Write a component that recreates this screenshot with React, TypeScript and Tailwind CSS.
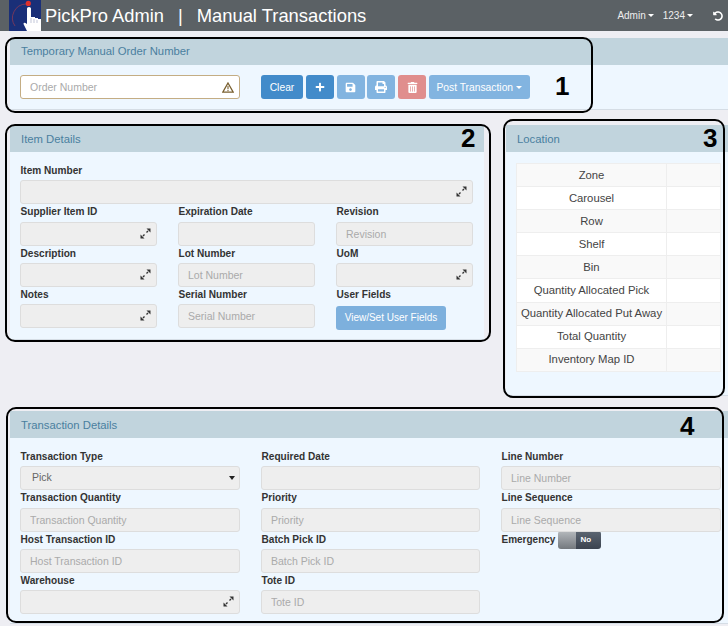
import { FaPlus, FaSave, FaPrint, FaTrashAlt, FaUndoAlt } from 'react-icons/fa';
import type { ReactNode } from 'react';

const LOCATION_ROWS = ['Zone', 'Carousel', 'Row', 'Shelf', 'Bin', 'Quantity Allocated Pick', 'Quantity Allocated Put Away', 'Total Quantity', 'Inventory Map ID'];

function ExpandIcon() {
  return (
    <svg width="11" height="11" viewBox="0 0 11 11" className="absolute right-[6px] top-[6px] text-[#333]">
      <path d="M6.5 0.5H10.5V4.5Z" fill="currentColor" />
      <path d="M4.5 10.5H0.5V6.5Z" fill="currentColor" />
      <path d="M8 3L6.5 4.5M3 8L4.5 6.5" stroke="currentColor" strokeWidth="1.4" />
    </svg>
  );
}

function Panel({ title, className, titleClass = 'pt-[1px]', children }: { title: string; className: string; titleClass?: string; children: ReactNode }) {
  return (
    <div className={`bg-[#eef7ff] border-b border-[#d5dde5] ${className}`}>
      <div className={`h-[27px] bg-[#c1d4dd] pl-[11px] flex items-center text-[11.3px] text-[#4a7f9f] ${titleClass}`}>{title}</div>
      {children}
    </div>
  );
}

function Label({ text }: { text: string }) {
  return <div className="h-[17.33px] pl-[0.5px] text-[10.1px] leading-[15px] font-bold text-[#333]">{text}</div>;
}

function Field({ label, placeholder, expand }: { label: string; placeholder?: string; expand?: boolean }) {
  return (
    <div>
      <Label text={label} />
      <div className="relative">
        <input readOnly placeholder={placeholder}
          className="block w-full h-[24px] rounded-[3px] border border-[#ddd] bg-[#eee] px-[9px] text-[10.5px] placeholder:text-[#aaa] outline-none" />
        {expand && <ExpandIcon />}
      </div>
    </div>
  );
}

function Callout({ n, box, num }: { n: string; box: string; num: string }) {
  return (
    <div className={`absolute border-2 border-black rounded-[10px] pointer-events-none ${box}`}>
      <span className={`absolute text-[26px] leading-none font-bold text-black ${num}`}>{n}</span>
    </div>
  );
}

export default function App() {
  return (
    <div className="relative w-[728px] h-[626px] overflow-hidden bg-[#eeeef3]" style={{ fontFamily: '"Liberation Sans", Arial, sans-serif' }}>
      {/* Navbar */}
      <div className="h-[31px] bg-[#5b6165] flex items-center text-white">
        <svg width="32" height="32" viewBox="0 0 32 32" className="ml-[9px] self-start shrink-0">
          <rect width="32" height="31" fill="#1a2f78" />
          <path d="M6 26A14 14 0 0 1 17 4" fill="none" stroke="#8a3a55" strokeWidth="0.8" />
          <circle cx="19.3" cy="3.4" r="2.6" fill="#e0302c" />
          <path d="M18 20V8.5Q18 7 20 7T22 8.5V17H26V18H29V19H32V31H18L14.5 24Q14.5 21.5 18 24Z" fill="#fff" />
          <path d="M25 19V23M28 20V23M22 18V23" stroke="#9aa3c0" strokeWidth="0.6" />
        </svg>
        <span className="ml-[4px] text-[18.3px]">PickPro Admin</span>
        <span className="ml-[14px] text-[18.3px]">|</span>
        <span className="ml-[14px] text-[18.4px]">Manual Transactions</span>
        <div className="ml-auto flex items-center text-[10px] text-[#eee]">
          <span>Admin</span>
          <span className="ml-[2px] border-x-[3px] border-t-[3px] border-x-transparent border-t-white" />
          <span className="ml-[9px]">1234</span>
          <span className="ml-[2px] border-x-[3px] border-t-[3px] border-x-transparent border-t-white" />
          <FaUndoAlt className="ml-[20px] mr-[5px] text-[10px] text-white" />
        </div>
      </div>

      {/* Temporary order */}
      <Panel title="Temporary Manual Order Number" titleClass="pb-[1px]" className="ml-[10px] mt-[7px] w-[718px] h-[72px]">
        <div className="pt-[10px] px-[10px] flex">
          <div className="relative w-[220px]">
            <input readOnly placeholder="Order Number"
              className="block w-full h-[24px] rounded-[3px] border border-[#c4ad84] bg-white px-[9px] text-[10.5px] placeholder:text-[#aaa] outline-none" />
            <svg width="12" height="11" viewBox="0 0 12 11" className="absolute right-[6px] top-[7px]">
              <path d="M6 1L11.2 10.2H0.8Z" fill="none" stroke="#7a6030" strokeWidth="1.3" />
              <path d="M6 4V7.3M6 8V9.2" stroke="#7a6030" strokeWidth="1.1" />
            </svg>
          </div>
          <div className="ml-[21px] flex gap-[2.75px] text-white text-[10.3px]">
            <button className="w-[42px] h-[24px] pt-[1px] rounded-[3px] bg-[#428bca]">Clear</button>
            <button className="w-[28px] h-[24px] rounded-[3px] bg-[#428bca] flex items-center justify-center"><FaPlus className="text-[10px]" /></button>
            <button className="w-[28px] h-[24px] rounded-[3px] bg-[#82b4e0] flex items-center justify-center"><FaSave className="text-[11px]" /></button>
            <button className="w-[28px] h-[24px] rounded-[3px] bg-[#82b4e0] flex items-center justify-center"><FaPrint className="text-[12px]" /></button>
            <button className="w-[28px] h-[24px] rounded-[3px] bg-[#e08e8d] flex items-center justify-center"><FaTrashAlt className="text-[11px]" /></button>
            <button className="w-[101px] h-[24px] pt-[1px] rounded-[3px] bg-[#82b4e0] flex items-center justify-center">
              Post Transaction
              <span className="ml-[3px] border-x-[3px] border-t-[3px] border-x-transparent border-t-white" />
            </button>
          </div>
        </div>
      </Panel>

      {/* Item details and location */}
      <div className="mt-[15px] ml-[10px] flex items-start h-[271px]">
        <Panel title="Item Details" className="w-[474px] h-[215px]">
          <div className="pt-[11px] pl-[10px] pr-[11px]">
            <Field label="Item Number" expand />
            <div className="grid grid-cols-[137px_137px_137px] gap-x-[21px]">
              <Field label="Supplier Item ID" expand />
              <Field label="Expiration Date" />
              <Field label="Revision" placeholder="Revision" />
              <Field label="Description" expand />
              <Field label="Lot Number" placeholder="Lot Number" />
              <Field label="UoM" expand />
              <Field label="Notes" expand />
              <Field label="Serial Number" placeholder="Serial Number" />
              <div>
                <Label text="User Fields" />
                <button className="w-[110px] h-[24px] rounded-[3px] bg-[#7db0dd] text-white text-[10px]">View/Set User Fields</button>
              </div>
            </div>
          </div>
        </Panel>

        <Panel title="Location" className="ml-[22px] w-[222px] h-[271px]">
          <div className="pt-[11px] pl-[10px]">
            <table className="w-[205px] border-collapse text-[11.3px] text-[#444]">
              <tbody>
                {LOCATION_ROWS.map((row, i) => (
                  <tr key={row} className={`h-[23.1px] ${i % 2 === 0 ? 'bg-[#f9f9f9]' : 'bg-white'}`}>
                    <td className="w-[150px] border border-[#eee] text-center p-0">{row}</td>
                    <td className="border border-[#eee] p-0" />
                  </tr>
                ))}
              </tbody>
            </table>
          </div>
        </Panel>
      </div>

      {/* Transaction details */}
      <Panel title="Transaction Details" className="mt-[15px] ml-[10px] w-[718px] h-[213px]">
        <div className="pt-[11px] px-[10px] grid grid-cols-[220px_219px_220px] gap-x-[21px]">
          <div>
            <Label text="Transaction Type" />
            <div className="relative h-[24px] rounded-[3px] border border-[#ddd] bg-[#eee] pl-[11px] flex items-center text-[10.5px] text-[#666]">
              Pick
              <span className="absolute right-[4px] top-[9px] border-x-[3px] border-t-[4px] border-x-transparent border-t-[#222]" />
            </div>
          </div>
          <Field label="Required Date" />
          <Field label="Line Number" placeholder="Line Number" />
          <Field label="Transaction Quantity" placeholder="Transaction Quantity" />
          <Field label="Priority" placeholder="Priority" />
          <Field label="Line Sequence" placeholder="Line Sequence" />
          <Field label="Host Transaction ID" placeholder="Host Transaction ID" />
          <Field label="Batch Pick ID" placeholder="Batch Pick ID" />
          <div className="flex items-start">
            <span className="pl-[0.5px] text-[10px] leading-[15px] font-bold text-[#333]">Emergency</span>
            <div className="ml-[3px] -mt-[1px] w-[43px] h-[18px] rounded-[3px] overflow-hidden flex shrink-0">
              <div className="w-[18px] bg-gradient-to-b from-[#b5b9bd] to-[#74797e]" />
              <div className="flex-1 bg-gradient-to-b from-[#5c6672] to-[#3c4450] text-white text-[8px] font-bold flex items-center pl-[4px]">No</div>
            </div>
          </div>
          <Field label="Warehouse" expand />
          <Field label="Tote ID" placeholder="Tote ID" />
        </div>
      </Panel>

      {/* Numbered callouts */}
      <Callout n="1" box="left-[5px] top-[37px] w-[588px] h-[76px]" num="left-[548px] top-[34px]" />
      <Callout n="2" box="left-[5px] top-[124px] w-[486px] h-[218px]" num="left-[454px] top-[-1px]" />
      <Callout n="3" box="left-[503px] top-[119px] w-[222px] h-[279px]" num="left-[198px] top-[4px]" />
      <Callout n="4" box="left-[6px] top-[407px] w-[718px] h-[216px]" num="left-[672px] top-[4px]" />
    </div>
  );
}
